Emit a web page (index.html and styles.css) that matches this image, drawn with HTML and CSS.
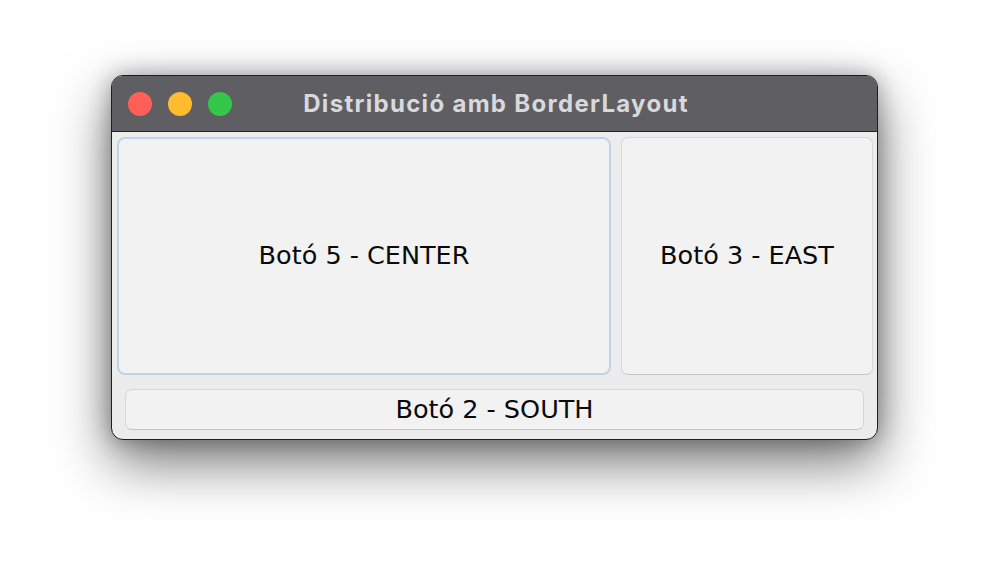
FILE: index.html
```html
<!DOCTYPE html>
<html lang="ca">
<head>
<meta charset="utf-8">
<title>Distribució amb BorderLayout</title>
<link rel="stylesheet" href="styles.css">
</head>
<body>
<div class="window">
  <div class="titlebar">
    <div class="lights">
      <span class="light red"></span>
      <span class="light yellow"></span>
      <span class="light green"></span>
    </div>
    <div class="title">Distribució amb BorderLayout</div>
  </div>
  <div class="content">
    <div class="row">
      <button class="btn center">Botó 5 - CENTER</button>
      <button class="btn east">Botó 3 - EAST</button>
    </div>
    <button class="btn south">Botó 2 - SOUTH</button>
  </div>
</div>
</body>
</html>
```
FILE: styles.css
```css
html, body {
  margin: 0;
  padding: 0;
  background: #ffffff;
  width: 990px;
  height: 588px;
  overflow: hidden;
}
body {
  padding: 75px 0 0 111px;
  box-sizing: border-box;
}
.window {
  width: 767px;
  height: 365px;
  box-sizing: border-box;
  border: 1px solid #1e1e1e;
  border-radius: 12px;
  background: #ececec;
  overflow: hidden;
  box-shadow: 0 22px 55px rgba(0, 0, 0, 0.55), 0 0 22px rgba(0, 0, 0, 0.3);
  display: flex;
  flex-direction: column;
}
.titlebar {
  height: 56px;
  box-sizing: border-box;
  background: #5f5f63;
  border-bottom: 1px solid #222222;
  display: flex;
  align-items: center;
  position: relative;
}
.lights {
  display: flex;
  gap: 16px;
  padding-left: 16px;
  padding-top: 1px;
}
.light {
  width: 24px;
  height: 24px;
  border-radius: 50%;
  display: block;
}
.red { background: #ff5f57; }
.yellow { background: #febc2e; }
.green { background: #34c84a; }
.title {
  position: absolute;
  left: 0;
  right: 0;
  top: 0;
  bottom: 0;
  display: flex;
  align-items: center;
  justify-content: center;
  font-family: "Inter", "Liberation Sans", sans-serif;
  font-weight: 700;
  font-size: 24px;
  letter-spacing: 1.3px;
  color: #d9d9dc;
  padding-left: 3px;
}
.content {
  flex: 1;
  display: flex;
  flex-direction: column;
  padding: 5px 4px 9px 5px;
}
.row {
  display: flex;
  gap: 10px;
  height: 238px;
}
.btn {
  font-family: "DejaVu Sans", "Liberation Sans", sans-serif;
  font-size: 25.5px;
  color: #0a0a0a;
  background: #f2f2f2;
  border: 1px solid #d6d6d6;
  border-bottom-color: #c4c4c4;
  border-radius: 7px;
  padding: 0 0 2px 0;
  margin: 0;
  box-sizing: border-box;
}
.center {
  width: 494px;
  border: 2px solid #bcd5ea;
  border-radius: 8px;
}
.east {
  width: 252px;
}
.south {
  margin: 14px 0 0 8px;
  width: 739px;
  height: 41px;
}
```
